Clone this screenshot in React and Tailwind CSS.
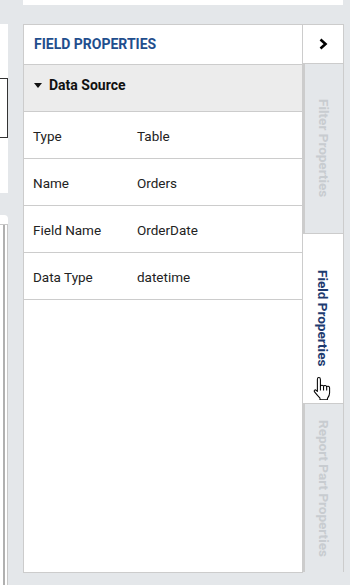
import React from "react";

const rows = [
  { label: "Type", value: "Table" },
  { label: "Name", value: "Orders" },
  { label: "Field Name", value: "OrderDate" },
  { label: "Data Type", value: "datetime" },
];

function HandCursor() {
  return (
    <svg width="19" height="23" viewBox="0 0 18 22" className="absolute left-[313px] top-[377px]">
      <path
        d="M5.5 0.5c1 0 1.5 0.8 1.5 1.8v6.2c0.6-0.9 2.6-0.8 3 0.3c0.6-0.9 2.6-0.8 3 0.4c0.7-0.7 2.8-0.5 2.8 1.2v4.6c0 2.6-1.3 4.3-2.1 5.5v1.3H6.6v-1.5C5 18.6 2.6 15.8 1.4 14.3c-0.9-1.2 0.4-2.6 1.6-1.6l1.1 1.1V2.3c0-1 0.4-1.8 1.4-1.8z"
        fill="#fff"
        stroke="#000"
        strokeWidth="1"
        strokeLinejoin="round"
      />
      <path d="M7 8.5v4.5M10 8.8v4.2M13 9.3v3.7" stroke="#000" strokeWidth="1" fill="none" />
    </svg>
  );
}

function SideTab({ label, active }) {
  return (
    <div
      className={
        "h-[170px] border-r border-b border-[#cccccc] flex items-center justify-center " +
        (active ? "bg-white" : "bg-[#e4e7ea] border-l-2")
      }
    >
      <span
        className={
          "[writing-mode:vertical-rl] text-[13.5px] font-bold " +
          (active ? "text-[#1e3b70]" : "text-[#c8ccd0]")
        }
      >
        {label}
      </span>
    </div>
  );
}

export default function App() {
  return (
    <div
      className="relative w-[350px] h-[585px] bg-[#e4e7ea] overflow-hidden"
      style={{ fontFamily: "Roboto, 'Liberation Sans', sans-serif" }}
    >
      <div className="ml-[23px] w-[320px] h-[5px] bg-white" />

      <div className="flex mt-[19px]">
        {/* left strip of the neighbouring panel */}
        <div className="w-[8px] flex flex-col">
          <div className="h-[169px] bg-white pt-[54px]">
            <div className="h-[60px] border-y border-r border-[#333333]" />
          </div>
          <div className="h-[22px]" />
          <div className="h-[370px] bg-white rounded-tr-[4px] pt-[9px]">
            <div className="h-full border-t border-r border-[#c8c8c8] flex">
              <div className="w-[3px]" />
              <div className="w-[2px] h-full bg-[#b0b0b0]" />
            </div>
          </div>
        </div>

        <div className="ml-[15px] flex h-[549px]">
          {/* field properties panel */}
          <div className="w-[280px] bg-white border-t border-l border-b border-r border-[#cccccc] flex flex-col">
            <div className="h-[40px] border-b border-[#cccccc] flex items-center px-[10px]">
              <span className="text-[14px] font-bold text-[#1f4e8d]">FIELD PROPERTIES</span>
            </div>
            <div className="h-[47px] bg-[#ececec] border-b border-[#cccccc] flex items-center px-[10px] pb-[5px] gap-[7px]">
              <svg width="8" height="5" viewBox="0 0 8 5">
                <path d="M0 0h8L4 5z" fill="#111" />
              </svg>
              <span className="text-[14px] font-bold text-[#111]">Data Source</span>
            </div>
            {rows.map((r) => (
              <div key={r.label} className="h-[47px] border-b border-[#cccccc] flex items-center px-[9px] pt-[2px] text-[13.5px] text-[#222]">
                <span className="w-[104px]">{r.label}</span>
                <span>{r.value}</span>
              </div>
            ))}
          </div>

          {/* side tabs */}
          <div className="w-[41px] flex flex-col">
            <div className="h-[40px] bg-white border-t border-r border-b border-[#cccccc] flex items-center justify-center">
              <svg width="10" height="12" viewBox="0 0 10 12">
                <path d="M2.5 1.5l5 4.5-5 4.5" stroke="#000" strokeWidth="2.6" fill="none" />
              </svg>
            </div>
            <SideTab label="Filter Properties" />
            <SideTab label="Field Properties" active />
            <div className="h-[168px] bg-[#e4e7ea] border-r border-l-2 border-[#cccccc] flex items-center justify-center">
              <span className="[writing-mode:vertical-rl] text-[13.5px] font-bold text-[#c8ccd0]">
                Report Part Properties
              </span>
            </div>
          </div>
        </div>
      </div>

      <HandCursor />
    </div>
  );
}
